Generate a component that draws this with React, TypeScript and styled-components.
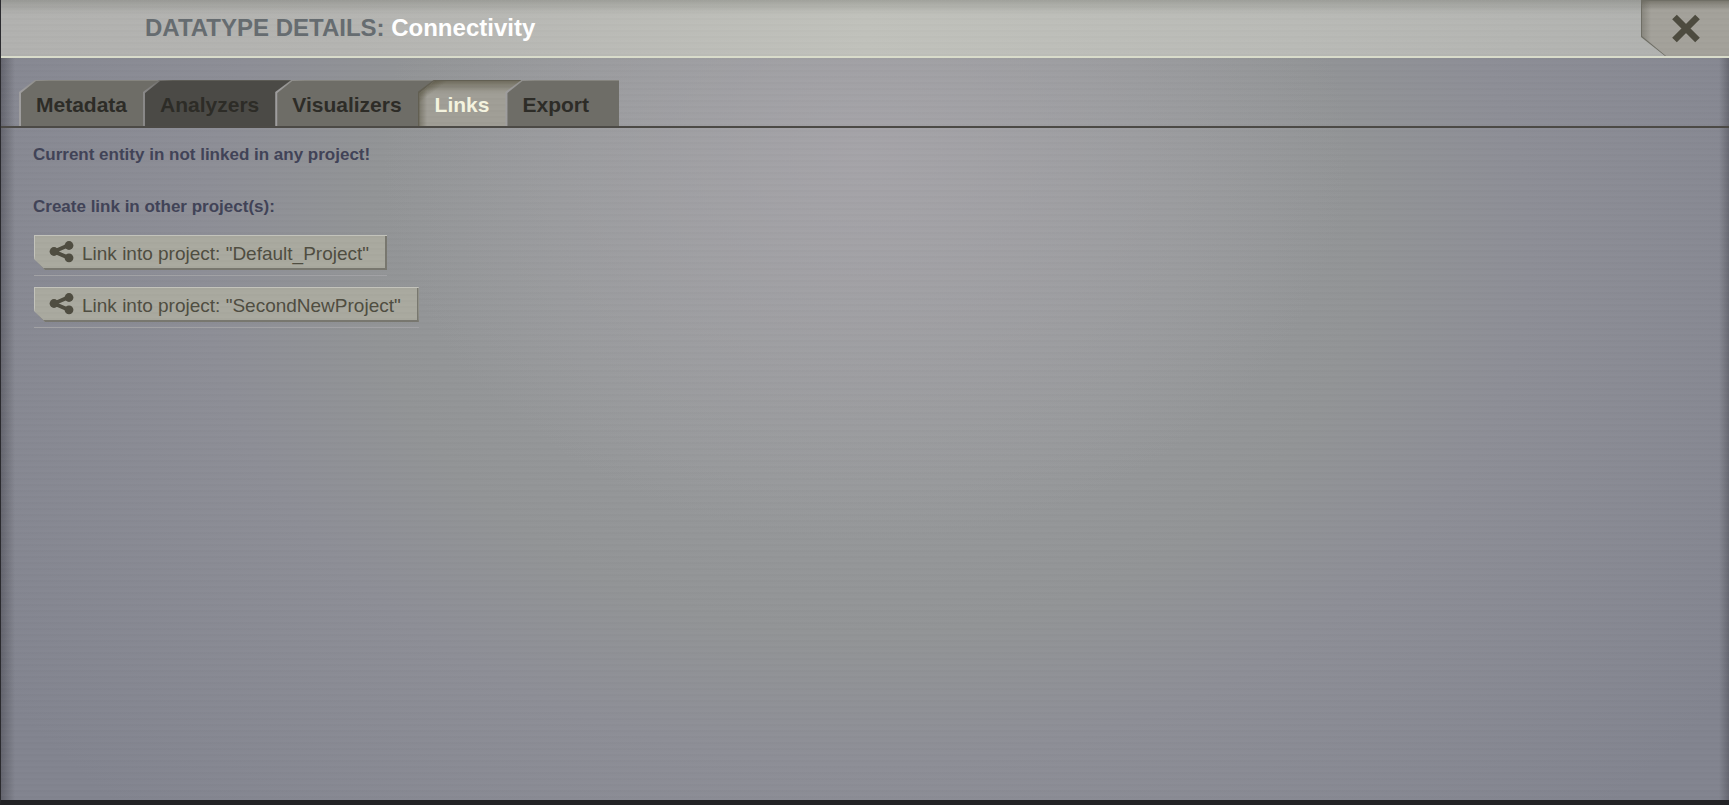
import React from "react";
import styled, { createGlobalStyle, css } from "styled-components";

const GlobalStyle = createGlobalStyle`
  *, *::before, *::after { box-sizing: border-box; }
  body {
    margin: 0;
    background: #222225;
    font-family: Helvetica, "Liberation Sans", Arial, sans-serif;
  }
`;

const scanlines = css`
  repeating-linear-gradient(
    to bottom,
    rgba(0, 0, 0, 0.01) 0 2px,
    transparent 2px 4px,
    rgba(255, 255, 255, 0.01) 4px 6px
  )
`;

const Overlay = styled.main`
  display: flex;
  flex-direction: column;
  min-height: 100vh;
  border-left: 1px solid #2b2b2f;
  border-bottom: 5px solid #222225;
`;

const Header = styled.header`
  display: flex;
  justify-content: space-between;
  height: 58px;
  border-bottom: 2px solid #d9dccb;
  background:
    ${scanlines},
    linear-gradient(to bottom, rgba(110, 112, 105, 0.35), transparent 14px),
    linear-gradient(to right, #b1b1af, #b4b4b1 20%, #c0c1bb 50%, #b9bab6 75%, #afb0ae);
`;

const Title = styled.h1`
  margin: 0;
  padding-left: 144px;
  font-size: 24px;
  line-height: 56px;
  color: #666c70;
`;

const EntityName = styled.span`
  color: #ffffff;
`;

const CloseButton = styled.button`
  position: relative;
  display: flex;
  align-items: center;
  justify-content: center;
  width: 88px;
  padding: 0 0 0 2px;
  border: 0;
  background: #6f6e65;
  clip-path: polygon(0 0, 100% 0, 100% 100%, 24px 100%, 0 37px);
  cursor: pointer;

  &::before {
    content: "";
    position: absolute;
    inset: 0;
    background:
      ${scanlines},
      linear-gradient(to right, rgba(90, 88, 78, 0.4), transparent 10px),
      linear-gradient(to bottom, rgba(90, 88, 78, 0.6), transparent 10px),
      #a3a19a;
    clip-path: polygon(1px 1px, 100% 1px, 100% 100%, 25px 100%, 1px 36px);
  }

  svg {
    position: relative;
  }
`;

const Body = styled.section`
  flex: 1;
  background:
    ${scanlines},
    linear-gradient(to right, rgba(50, 50, 58, 0.4), transparent 14px),
    linear-gradient(to left, rgba(50, 50, 58, 0.35), transparent 10px),
    radial-gradient(ellipse 28% 52% at 50% 13%, rgba(168, 166, 171, 0.8), rgba(168, 166, 171, 0)),
    radial-gradient(ellipse 60% 108% at 50% 26%, #9a9b9e 0%, #96989a 30%, #929496 48%, #8d8e96 64%, #82848f 100%);
`;

const TabBar = styled.nav`
  display: flex;
  padding: 22px 0 0 18px;
  background: linear-gradient(#4c4a46, #4c4a46) left bottom / 100% 2px no-repeat;
`;

type TabTone = "plain" | "dark" | "active";

const tabFill: Record<TabTone, string> = {
  plain: "#6e6d67",
  dark: "#4b4a46",
  active: "#9c998f",
};

const tabEdge: Record<TabTone, string> = {
  plain: "linear-gradient(to right, #a09fa0, #85847e 30px)",
  dark: "linear-gradient(to right, #8b8a8a, #5c5b55 30px)",
  active: "#625f52",
};

const Tab = styled.button<{ $tone: TabTone; $last?: boolean }>`
  position: relative;
  height: 48px;
  padding: 3px ${(p) => (p.$last ? "30px" : "32px")} 0 17px;
  margin-right: ${(p) => (p.$last ? "0" : "-16px")};
  border: 0;
  border-bottom: 2px solid #4c4a46;
  background: ${(p) => tabEdge[p.$tone]};
  clip-path: polygon(0 12px, 16px 0, 100% 0, 100% 100%, 0 100%);
  color: ${(p) => (p.$tone === "active" ? "#f4f3df" : "#2d2c27")};
  font: bold 21px/44px Helvetica, "Liberation Sans", Arial, sans-serif;
  cursor: pointer;

  &::before {
    content: "";
    position: absolute;
    inset: 0;
    clip-path: polygon(2px 13px, 17px 1px, 100% 1px, 100% 100%, 2px 100%);
    background: ${(p) => tabFill[p.$tone]};
    ${(p) =>
      p.$tone === "active" &&
      css`
        background:
          ${scanlines},
          linear-gradient(to right, rgba(88, 84, 66, 0.6), transparent 9px),
          linear-gradient(to bottom, rgba(88, 84, 66, 0.7), transparent 13px),
          linear-gradient(143deg, rgba(88, 84, 66, 0.6) 10px, transparent 19px),
          #a09e96;
      `}
  }

  span {
    position: relative;
  }
`;

const Content = styled.div`
  display: flex;
  flex-direction: column;
  align-items: flex-start;
  padding: 1px 32px 0;
`;

const Message = styled.h2`
  margin: 0;
  font-size: 17px;
  line-height: 52px;
  color: #414357;
`;

const LinkList = styled.ul`
  display: flex;
  flex-direction: column;
  align-items: flex-start;
  gap: 11px;
  margin: 0;
  padding: 2px 0 0 1px;
  list-style: none;
`;

const LinkItem = styled.li`
  height: 41px;
  border-bottom: 1px solid #a2a2a5;
`;

const LinkButton = styled.button`
  position: relative;
  display: flex;
  align-items: center;
  gap: 8px;
  height: 35px;
  padding: 0 18px 0 15px;
  border: 0;
  background: linear-gradient(to bottom, #c3c3bb 60%, #78776f);
  clip-path: polygon(0 0, 100% 0, 100% 100%, 11px 100%, 0 24px);
  color: #4f4d41;
  font: 19px/22px Helvetica, "Liberation Sans", Arial, sans-serif;
  cursor: pointer;

  &::before {
    content: "";
    position: absolute;
    inset: 1px 0 0 1px;
    border-right: 2px solid #78776f;
    border-bottom: 2px solid #78776f;
    background: ${scanlines}, #a9a99f;
    clip-path: polygon(0 0, 100% 0, 100% 100%, 10px 100%, 0 23px);
  }

  svg, span {
    position: relative;
  }

  span {
    padding-top: 2px;
  }
`;

const ShareIcon = () => (
  <svg width="25" height="24" viewBox="0 0 25 24" fill="#4f4d41" aria-hidden="true">
    <path d="M5 10.5 20 4M5 10.5 20 17" stroke="#4f4d41" strokeWidth="4" fill="none" />
    <circle cx="5" cy="10.5" r="4.4" />
    <circle cx="20" cy="4.5" r="4.4" />
    <circle cx="20" cy="16.8" r="4.4" />
  </svg>
);

const CrossIcon = () => (
  <svg width="30" height="30" viewBox="0 0 30 30" aria-hidden="true">
    <path d="M3.5 4 26.5 27M26.5 4 3.5 27" stroke="#4d4b3f" strokeWidth="6.6" />
  </svg>
);

const tabs: { label: string; tone: TabTone }[] = [
  { label: "Metadata", tone: "plain" },
  { label: "Analyzers", tone: "dark" },
  { label: "Visualizers", tone: "plain" },
  { label: "Links", tone: "active" },
  { label: "Export", tone: "plain" },
];

const projects = ["Default_Project", "SecondNewProject"];

export default function App() {
  return (
    <>
      <GlobalStyle />
      <Overlay>
        <Header>
          <Title>
            DATATYPE DETAILS: <EntityName>Connectivity</EntityName>
          </Title>
          <CloseButton type="button" aria-label="Close">
            <CrossIcon />
          </CloseButton>
        </Header>
        <Body>
          <TabBar>
            {tabs.map((tab, i) => (
              <Tab key={tab.label} type="button" $tone={tab.tone} $last={i === tabs.length - 1}>
                <span>{tab.label}</span>
              </Tab>
            ))}
          </TabBar>
          <Content>
            <Message>Current entity in not linked in any project!</Message>
            <Message>Create link in other project(s):</Message>
            <LinkList>
              {projects.map((name) => (
                <LinkItem key={name}>
                  <LinkButton type="button">
                    <ShareIcon />
                    <span>Link into project: "{name}"</span>
                  </LinkButton>
                </LinkItem>
              ))}
            </LinkList>
          </Content>
        </Body>
      </Overlay>
    </>
  );
}
